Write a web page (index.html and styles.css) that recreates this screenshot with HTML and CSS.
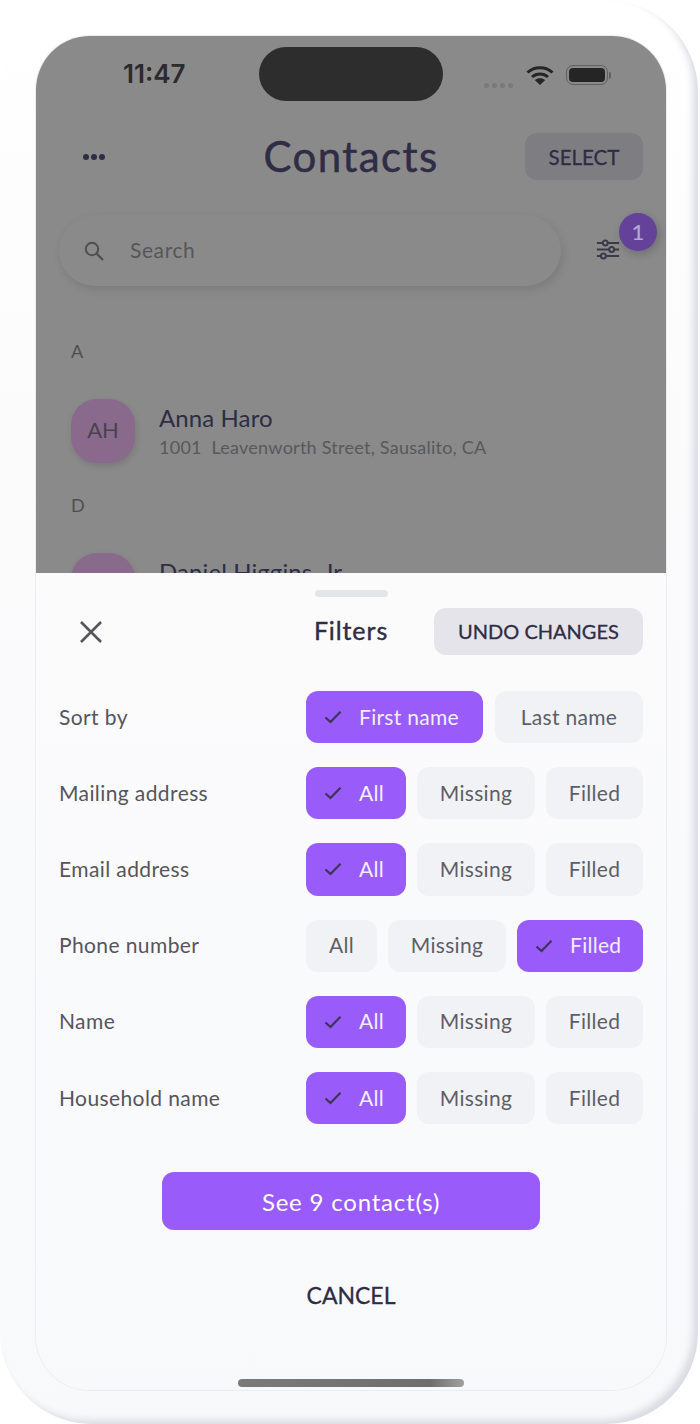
FILE: index.html
```html
<!DOCTYPE html>
<html lang="en">
<head>
    <meta charset="UTF-8">
    <meta name="viewport" content="width=device-width, initial-scale=1.0">
    <title>Contacts</title>
    <link rel="stylesheet" href="styles.css">
</head>
<body>

<svg class="sprite" width="0" height="0">
    <symbol id="check" viewBox="0 0 18 14">
        <path d="M1.5 7.5 6.5 12 16.5 1.8" fill="none" stroke="currentColor" stroke-width="2.2"/>
    </symbol>
</svg>

<div class="phone">
    <div class="screen">
        <div class="backdrop">
            <div class="status">
                <span class="time">11:47</span>
                <div class="island"></div>
                <div class="status-icons">
                    <div class="signal"><i></i><i></i><i></i><i></i></div>
                    <svg class="wifi" width="28" height="20" viewBox="0 0 28 20">
                        <path d="M1.5 7.5C8.5 1 19.5 1 26.5 7.5" fill="none" stroke="#252525" stroke-width="3"/>
                        <path d="M6 12C10.5 8 17.5 8 22 12" fill="none" stroke="#252525" stroke-width="3"/>
                        <path d="M14 20 8.8 15C11.8 12.7 16.2 12.7 19.2 15Z" fill="#252525"/>
                    </svg>
                    <div class="battery"><div class="battery-fill"></div></div>
                    <div class="battery-tip"></div>
                </div>
            </div>

            <div class="topbar">
                <div class="more"><i></i><i></i><i></i></div>
                <h1>Contacts</h1>
                <button class="select-btn">SELECT</button>
            </div>

            <div class="search-row">
                <div class="search">
                    <svg width="22" height="22" viewBox="0 0 22 22">
                        <circle cx="9" cy="9" r="6.2" fill="none" stroke="#4f4f52" stroke-width="2"/>
                        <path d="M13.5 13.5 20 20" stroke="#4f4f52" stroke-width="2.2"/>
                    </svg>
                    <span>Search</span>
                </div>
                <div class="filter-btn">
                    <svg width="24" height="23" viewBox="0 0 26 24">
                        <g stroke="#3b3a48" stroke-width="2.2" fill="#8a8a8a">
                            <path d="M1 5H25M1 12H25M1 19H25"/>
                            <circle cx="10" cy="5" r="2.7"/>
                            <circle cx="17" cy="12" r="2.7"/>
                            <circle cx="8" cy="19" r="2.7"/>
                        </g>
                    </svg>
                    <span class="badge">1</span>
                </div>
            </div>

            <div class="letter first">A</div>
            <div class="contact">
                <div class="avatar">AH</div>
                <div>
                    <div class="name">Anna Haro</div>
                    <div class="address">1001&nbsp; Leavenworth Street, Sausalito, CA</div>
                </div>
            </div>

            <div class="letter">D</div>
            <div class="contact">
                <div class="avatar"></div>
                <div>
                    <div class="name">Daniel Higgins, Jr.</div>
                </div>
            </div>
        </div>

        <div class="sheet">
            <div class="handle"></div>
            <div class="sheet-head">
                <svg class="close" width="24" height="24" viewBox="0 0 24 24">
                    <path d="M2 2 22 22M22 2 2 22" stroke="#55555d" stroke-width="2.6"/>
                </svg>
                <h2>Filters</h2>
                <button class="undo-btn">UNDO CHANGES</button>
            </div>

            <div class="filters">
                <div class="filter-row">
                    <span class="filter-label">Sort by</span>
                    <div class="opts opts-sort">
                        <div class="opt on"><svg class="tick"><use href="#check"/></svg>First name</div>
                        <div class="opt">Last name</div>
                    </div>
                </div>
                <div class="filter-row">
                    <span class="filter-label">Mailing address</span>
                    <div class="opts opts-all">
                        <div class="opt on"><svg class="tick"><use href="#check"/></svg>All</div>
                        <div class="opt">Missing</div>
                        <div class="opt">Filled</div>
                    </div>
                </div>
                <div class="filter-row">
                    <span class="filter-label">Email address</span>
                    <div class="opts opts-all">
                        <div class="opt on"><svg class="tick"><use href="#check"/></svg>All</div>
                        <div class="opt">Missing</div>
                        <div class="opt">Filled</div>
                    </div>
                </div>
                <div class="filter-row">
                    <span class="filter-label">Phone number</span>
                    <div class="opts opts-filled">
                        <div class="opt">All</div>
                        <div class="opt">Missing</div>
                        <div class="opt on"><svg class="tick"><use href="#check"/></svg>Filled</div>
                    </div>
                </div>
                <div class="filter-row">
                    <span class="filter-label">Name</span>
                    <div class="opts opts-all">
                        <div class="opt on"><svg class="tick"><use href="#check"/></svg>All</div>
                        <div class="opt">Missing</div>
                        <div class="opt">Filled</div>
                    </div>
                </div>
                <div class="filter-row">
                    <span class="filter-label">Household name</span>
                    <div class="opts opts-all">
                        <div class="opt on"><svg class="tick"><use href="#check"/></svg>All</div>
                        <div class="opt">Missing</div>
                        <div class="opt">Filled</div>
                    </div>
                </div>
            </div>

            <button class="see-btn">See 9 contact(s)</button>
            <button class="cancel-btn">CANCEL</button>
            <div class="home-bar"></div>
        </div>
    </div>
</div>

</body>
</html>
```

FILE: styles.css
```css
* {
    box-sizing: border-box;
}

body {
    font-family: 'Lato', sans-serif;
    background-color: #FFFFFF;
    color: #2F2C45;
    margin: 0;
    padding: 0;
}

button {
    font-family: inherit;
    border: none;
    padding: 0;
}

.sprite {
    display: block;
    height: 0;
}

.phone {
    width: 698px;
    height: 1424px;
    padding: 36px 32px 34px 36px;
    background: linear-gradient(180deg, #FFFFFF, #FBFBFC 30%, #F8F9FB);
    border-radius: 92px;
    box-shadow: inset -6px -5px 7px -1px #DADBE3;
}

.screen {
    height: 100%;
    display: flex;
    flex-direction: column;
    border-radius: 54px;
    overflow: hidden;
    box-shadow: 0 0 0 1px #ECEDF0;
}

.backdrop {
    height: 537px;
    flex-shrink: 0;
    overflow: hidden;
    background-color: #8A8A8A;
}

.status {
    height: 65px;
    padding-top: 11px;
    display: grid;
    grid-template-columns: 1fr 184px 1fr;
}

.time {
    padding: 12px 0 0 87px;
    font-family: 'Inter', sans-serif;
    font-size: 26px;
    font-weight: 600;
    line-height: 30px;
    color: #2B2B2B;
}

.island {
    height: 54px;
    background-color: #2D2D2D;
    border-radius: 27px;
}

.status-icons {
    height: 30px;
    margin-top: 13px;
    padding-left: 41px;
    display: flex;
    align-items: center;
}

.signal {
    display: flex;
    gap: 3px;
    margin: 20px 13px 0 0;
}

.signal i {
    width: 5px;
    height: 5px;
    background-color: #7A7A7A;
    border-radius: 50%;
}

.wifi {
    margin-right: 12px;
}

.battery {
    width: 42px;
    height: 20px;
    padding: 2px;
    border: 1.5px solid #5F5F5F;
    border-radius: 7px;
}

.battery-fill {
    height: 100%;
    background-color: #252525;
    border-radius: 4px;
}

.battery-tip {
    width: 2px;
    height: 7px;
    margin-left: 1px;
    background-color: #5F5F5F;
    border-radius: 0 2px 2px 0;
}

.topbar {
    margin-top: 32px;
    padding: 0 23px 0 47px;
    height: 47px;
    display: grid;
    grid-template-columns: 1fr auto 1fr;
    align-items: center;
}

.more {
    display: flex;
    gap: 2px;
}

.more i {
    width: 6px;
    height: 6px;
    background-color: #2F2C45;
    border-radius: 50%;
}

.topbar h1 {
    margin: 0 12px 0 -12px;
    font-size: 42px;
    font-weight: 400;
    letter-spacing: 1.4px;
    line-height: 47px;
    -webkit-text-stroke: 0.5px #2F2C45;
}

.select-btn {
    justify-self: end;
    width: 118px;
    height: 47px;
    background-color: #7E7E82;
    border-radius: 12px;
    color: #2F2C45;
    font-size: 20.5px;
    -webkit-text-stroke: 0.3px #2F2C45;
}

.search-row {
    margin-top: 35px;
    padding: 0 23px;
    display: flex;
    justify-content: space-between;
}

.search {
    width: 502px;
    height: 71px;
    padding: 0 0 2px 24px;
    display: flex;
    align-items: center;
    gap: 25px;
    border-radius: 36px;
    background-color: #8A8A8A;
    box-shadow: 2px 4px 8px rgba(0, 0, 0, 0.1);
    color: #565659;
    font-size: 21px;
    letter-spacing: 0.6px;
}

.search svg {
    margin-top: 2px;
}

.filter-btn {
    position: relative;
    width: 47px;
    padding-top: 23px;
}

.badge {
    position: absolute;
    top: -2px;
    right: -14px;
    width: 38px;
    height: 38px;
    border-radius: 50%;
    background-color: #64429A;
    box-shadow: 2px 3px 8px rgba(0, 0, 0, 0.2);
    color: #B9A9CF;
    font-size: 22px;
    font-weight: 500;
    line-height: 38px;
    text-align: center;
}

.letter {
    margin: 32px 0 38px 35px;
    height: 20px;
    color: #4F4F52;
    font-size: 18px;
    line-height: 20px;
}

.letter.first {
    margin-top: 55px;
}

.contact {
    height: 64px;
    margin-left: 35px;
    display: flex;
    gap: 24px;
}

.avatar {
    width: 64px;
    height: 64px;
    flex-shrink: 0;
    background-color: #8A6A8C;
    border-radius: 26px;
    box-shadow: 1px 3px 6px rgba(0, 0, 0, 0.12);
    color: #4A4150;
    font-size: 22px;
    line-height: 62px;
    text-align: center;
}

.name {
    margin-top: 5px;
    font-size: 24px;
    line-height: 28px;
    letter-spacing: 0.1px;
}

.address {
    margin-top: 3px;
    color: #58585B;
    font-size: 18px;
    line-height: 24px;
    letter-spacing: 0.25px;
}

.sheet {
    flex: 1;
    padding: 17px 23px 0;
    display: flex;
    flex-direction: column;
    background: linear-gradient(180deg, #FBFBFC, #F8F9FB);
}

.handle {
    width: 73px;
    height: 7px;
    margin: 0 auto 11px;
    background-color: #E4E5EA;
    border-radius: 4px;
}

.sheet-head {
    display: grid;
    grid-template-columns: 1fr auto 1fr;
    align-items: center;
    height: 47px;
}

.close {
    margin-left: 20px;
}

.sheet-head h2 {
    margin: 0 0 4px;
    font-size: 25px;
    font-weight: 400;
    letter-spacing: 0.9px;
    -webkit-text-stroke: 0.4px #2F2C45;
}

.undo-btn {
    justify-self: end;
    width: 209px;
    height: 47px;
    padding-bottom: 2px;
    background-color: #E5E4EB;
    border-radius: 12px;
    color: #2F2C45;
    font-size: 20px;
    -webkit-text-stroke: 0.3px #2F2C45;
}

.filters {
    margin-top: 36px;
    display: flex;
    flex-direction: column;
    gap: 24px;
}

.filter-row {
    display: flex;
    justify-content: space-between;
    align-items: center;
    height: 52.2px;
}

.filter-label {
    padding-bottom: 2px;
    color: #55555D;
    font-size: 21px;
    letter-spacing: 0.4px;
}

.opts {
    display: grid;
    gap: 11px;
}

.opts-sort {
    grid-template-columns: 177px 148px;
    gap: 12px;
}

.opts-all {
    grid-template-columns: 100px 118px 97px;
}

.opts-filled {
    grid-template-columns: 71px 118px 126px;
}

.opt {
    height: 52.2px;
    padding-bottom: 2px;
    display: flex;
    align-items: center;
    justify-content: center;
    background-color: #F1F2F6;
    border-radius: 12px;
    color: #5E5E66;
    font-size: 21px;
    letter-spacing: 0.3px;
}

.opt.on {
    padding-left: 18px;
    justify-content: flex-start;
    background-color: #995CFB;
    color: #F3EEFF;
}

.tick {
    width: 18px;
    height: 14px;
    margin: 2px 17px 0 0;
    color: #3B3556;
}

.see-btn {
    width: 378px;
    height: 58px;
    margin: 48px auto 0;
    flex-shrink: 0;
    background-color: #995CFB;
    border-radius: 12px;
    color: #FFFFFF;
    font-size: 24px;
    letter-spacing: 0.8px;
}

.cancel-btn {
    margin-top: 51px;
    height: 25px;
    background: none;
    color: #2F2C45;
    font-size: 23px;
    -webkit-text-stroke: 0.3px #2F2C45;
}

.home-bar {
    width: 226px;
    height: 8px;
    margin: auto auto 3px;
    background: linear-gradient(90deg, #7A7A7A, #6E6E6E 85%, #A0A0A0);
    border-radius: 4px;
}
```
